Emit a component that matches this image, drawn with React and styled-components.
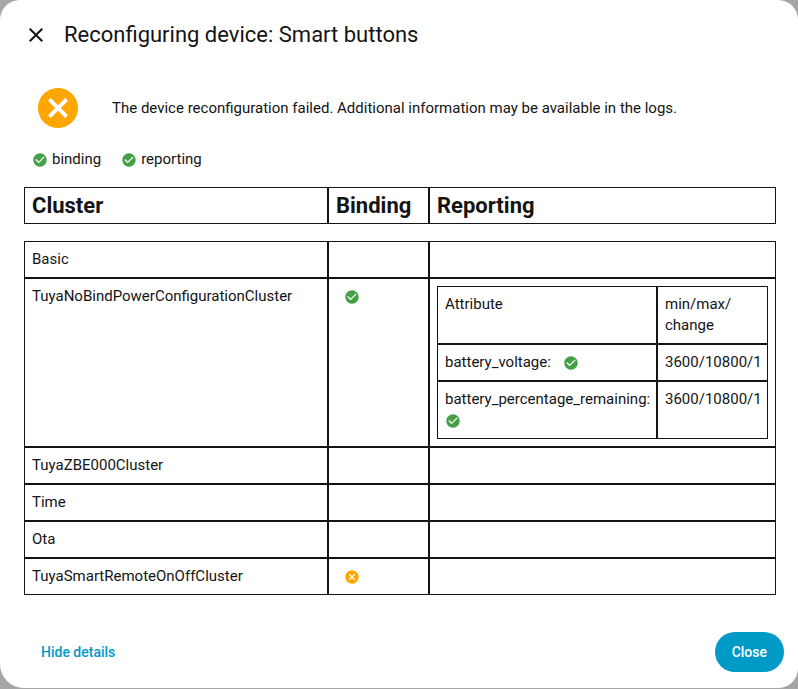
import React from 'react';
import styled, { createGlobalStyle } from 'styled-components';

const GlobalStyle = createGlobalStyle`
  * {
    box-sizing: border-box;
  }

  body {
    margin: 0;
    min-height: 100vh;
    background-color: #a6a6a6;
    color: #141414;
    font-family: Roboto, sans-serif;
    font-size: 15px;
    line-height: 21px;
  }
`;

// Styled-Components
const Dialog = styled.div`
  width: 100%;
  margin-bottom: 1px;
  background-color: #fff;
  border-radius: 20px 20px 20px 24px;
`;

const DialogHeader = styled.header`
  display: flex;
  align-items: center;
  gap: 16px;
  padding: 15px 24px 14px;
`;

const IconButton = styled.button`
  display: flex;
  width: 24px;
  height: 24px;
  padding: 0;
  border: none;
  background: none;
  color: #141414;
  cursor: pointer;
`;

const DialogTitle = styled.h1`
  margin: 0;
  font-size: 22px;
  font-weight: 400;
  line-height: 40px;
`;

const DialogContent = styled.div`
  padding: 15px 22px 20px 24px;
`;

const Result = styled.div`
  display: flex;
  align-items: center;
  gap: 30px;
  padding-left: 10px;
`;

const Message = styled.p`
  margin: 0;
`;

const Stages = styled.div`
  display: flex;
  gap: 20px;
  padding: 17px 8px;
`;

const Stage = styled.span`
  display: flex;
  align-items: center;
  gap: 4px;
`;

const Icon = styled.svg`
  display: block;
  flex: none;
  width: ${({ $size }) => $size}px;
  height: ${({ $size }) => $size}px;
  fill: ${({ $color }) => $color};
`;

const CellIcon = styled.span`
  display: inline-block;
  height: 16px;
  vertical-align: -4px;
`;

const BindingStatus = styled.div`
  padding-left: 8px;
`;

const AttributeName = styled.span`
  margin-right: 8px;
`;

const Table = styled.table`
  width: 100%;
  border-spacing: 0;
  table-layout: fixed;
`;

const Column = styled.col`
  width: ${({ $width }) => $width};
`;

const HeadCell = styled.th`
  height: 37px;
  padding: 7px;
  border: 1px solid #141414;
  font-size: 22px;
  font-weight: 700;
  text-align: left;
`;

const Body = styled.tbody`
  &::before {
    content: '';
    display: block;
    height: 17px;
  }
`;

const Cell = styled.td`
  height: 37px;
  padding: 7px;
  border: 1px solid #141414;
  vertical-align: top;
`;

const AttributeHead = styled(Cell).attrs({ as: 'th' })`
  font-weight: 400;
  text-align: left;
`;

const DialogFooter = styled.footer`
  display: flex;
  justify-content: space-between;
  padding: 17px 14px 16px 24px;
`;

const Button = styled.button`
  height: 40px;
  padding: 0 17px;
  border: none;
  border-radius: 20px;
  background-color: ${({ $filled }) => ($filled ? '#009ac7' : 'transparent')};
  color: ${({ $filled }) => ($filled ? '#fff' : '#009ac7')};
  font-family: inherit;
  font-size: 14px;
  font-weight: 500;
  line-height: 21px;
  cursor: pointer;
`;

const CLOSE =
  'M19,6.41L17.59,5L12,10.59L6.41,5L5,6.41L10.59,12L5,17.59L6.41,19L12,13.41L17.59,19L19,17.59L13.41,12L19,6.41Z';
const CHECK_CIRCLE =
  'M12 2C6.5 2 2 6.5 2 12S6.5 22 12 22 22 17.5 22 12 17.5 2 12 2M10 17L5 12L6.41 10.59L10 14.17L17.59 6.58L19 8L10 17Z';
const CLOSE_CIRCLE =
  'M12,2C17.53,2 22,6.47 22,12C22,17.53 17.53,22 12,22C6.47,22 2,17.53 2,12C2,6.47 6.47,2 12,2M15.59,7L12,10.59L8.41,7L7,8.41L10.59,12L7,15.59L8.41,17L12,13.41L15.59,17L17,15.59L13.41,12L17,8.41L15.59,7Z';

const SvgIcon = ({ path, size = 16, color = 'currentColor' }) => (
  <Icon viewBox="0 0 24 24" $size={size} $color={color} aria-hidden="true">
    <path d={path} />
  </Icon>
);

const StatusIcon = ({ ok }) => (
  <SvgIcon path={ok ? CHECK_CIRCLE : CLOSE_CIRCLE} color={ok ? '#43a047' : '#ffa600'} />
);

const clusters = [
  { name: 'Basic' },
  {
    name: 'TuyaNoBindPowerConfigurationCluster',
    bound: true,
    attributes: [
      { name: 'battery_voltage', change: '3600/10800/1' },
      { name: 'battery_percentage_remaining', change: '3600/10800/1' },
    ],
  },
  { name: 'TuyaZBE000Cluster' },
  { name: 'Time' },
  { name: 'Ota' },
  { name: 'TuyaSmartRemoteOnOffCluster', bound: false },
];

const AttributeTable = ({ attributes }) => (
  <Table>
    <colgroup>
      <Column />
      <Column $width="111px" />
    </colgroup>
    <thead>
      <tr>
        <AttributeHead>Attribute</AttributeHead>
        <AttributeHead>
          min/max/
          <wbr />
          change
        </AttributeHead>
      </tr>
    </thead>
    <tbody>
      {attributes.map((attribute) => (
        <tr key={attribute.name}>
          <Cell>
            <AttributeName>{attribute.name}:</AttributeName>{' '}
            <CellIcon>
              <StatusIcon ok />
            </CellIcon>
          </Cell>
          <Cell>{attribute.change}</Cell>
        </tr>
      ))}
    </tbody>
  </Table>
);

const App = () => {
  return (
    <>
      <GlobalStyle />
      <Dialog role="dialog" aria-labelledby="dialog-title">
        <DialogHeader>
          <IconButton aria-label="Close dialog">
            <SvgIcon path={CLOSE} size={24} />
          </IconButton>
          <DialogTitle id="dialog-title">Reconfiguring device: Smart buttons</DialogTitle>
        </DialogHeader>
        <DialogContent>
          <Result>
            <SvgIcon path={CLOSE_CIRCLE} size={48} color="#ffa600" />
            <Message>
              The device reconfiguration failed. Additional information may be available in the logs.
            </Message>
          </Result>
          <Stages>
            <Stage>
              <StatusIcon ok />
              binding
            </Stage>
            <Stage>
              <StatusIcon ok />
              reporting
            </Stage>
          </Stages>
          <Table>
            <colgroup>
              <Column $width="304px" />
              <Column $width="101px" />
              <Column />
            </colgroup>
            <thead>
              <tr>
                <HeadCell>Cluster</HeadCell>
                <HeadCell>Binding</HeadCell>
                <HeadCell>Reporting</HeadCell>
              </tr>
            </thead>
            <Body>
              {clusters.map(({ name, bound, attributes }) => (
                <tr key={name}>
                  <Cell>{name}</Cell>
                  <Cell>
                    {bound !== undefined && (
                      <BindingStatus>
                        <CellIcon>
                          <StatusIcon ok={bound} />
                        </CellIcon>
                      </BindingStatus>
                    )}
                  </Cell>
                  <Cell>{attributes && <AttributeTable attributes={attributes} />}</Cell>
                </tr>
              ))}
            </Body>
          </Table>
        </DialogContent>
        <DialogFooter>
          <Button>Hide details</Button>
          <Button $filled>Close</Button>
        </DialogFooter>
      </Dialog>
    </>
  );
};

export default App;
